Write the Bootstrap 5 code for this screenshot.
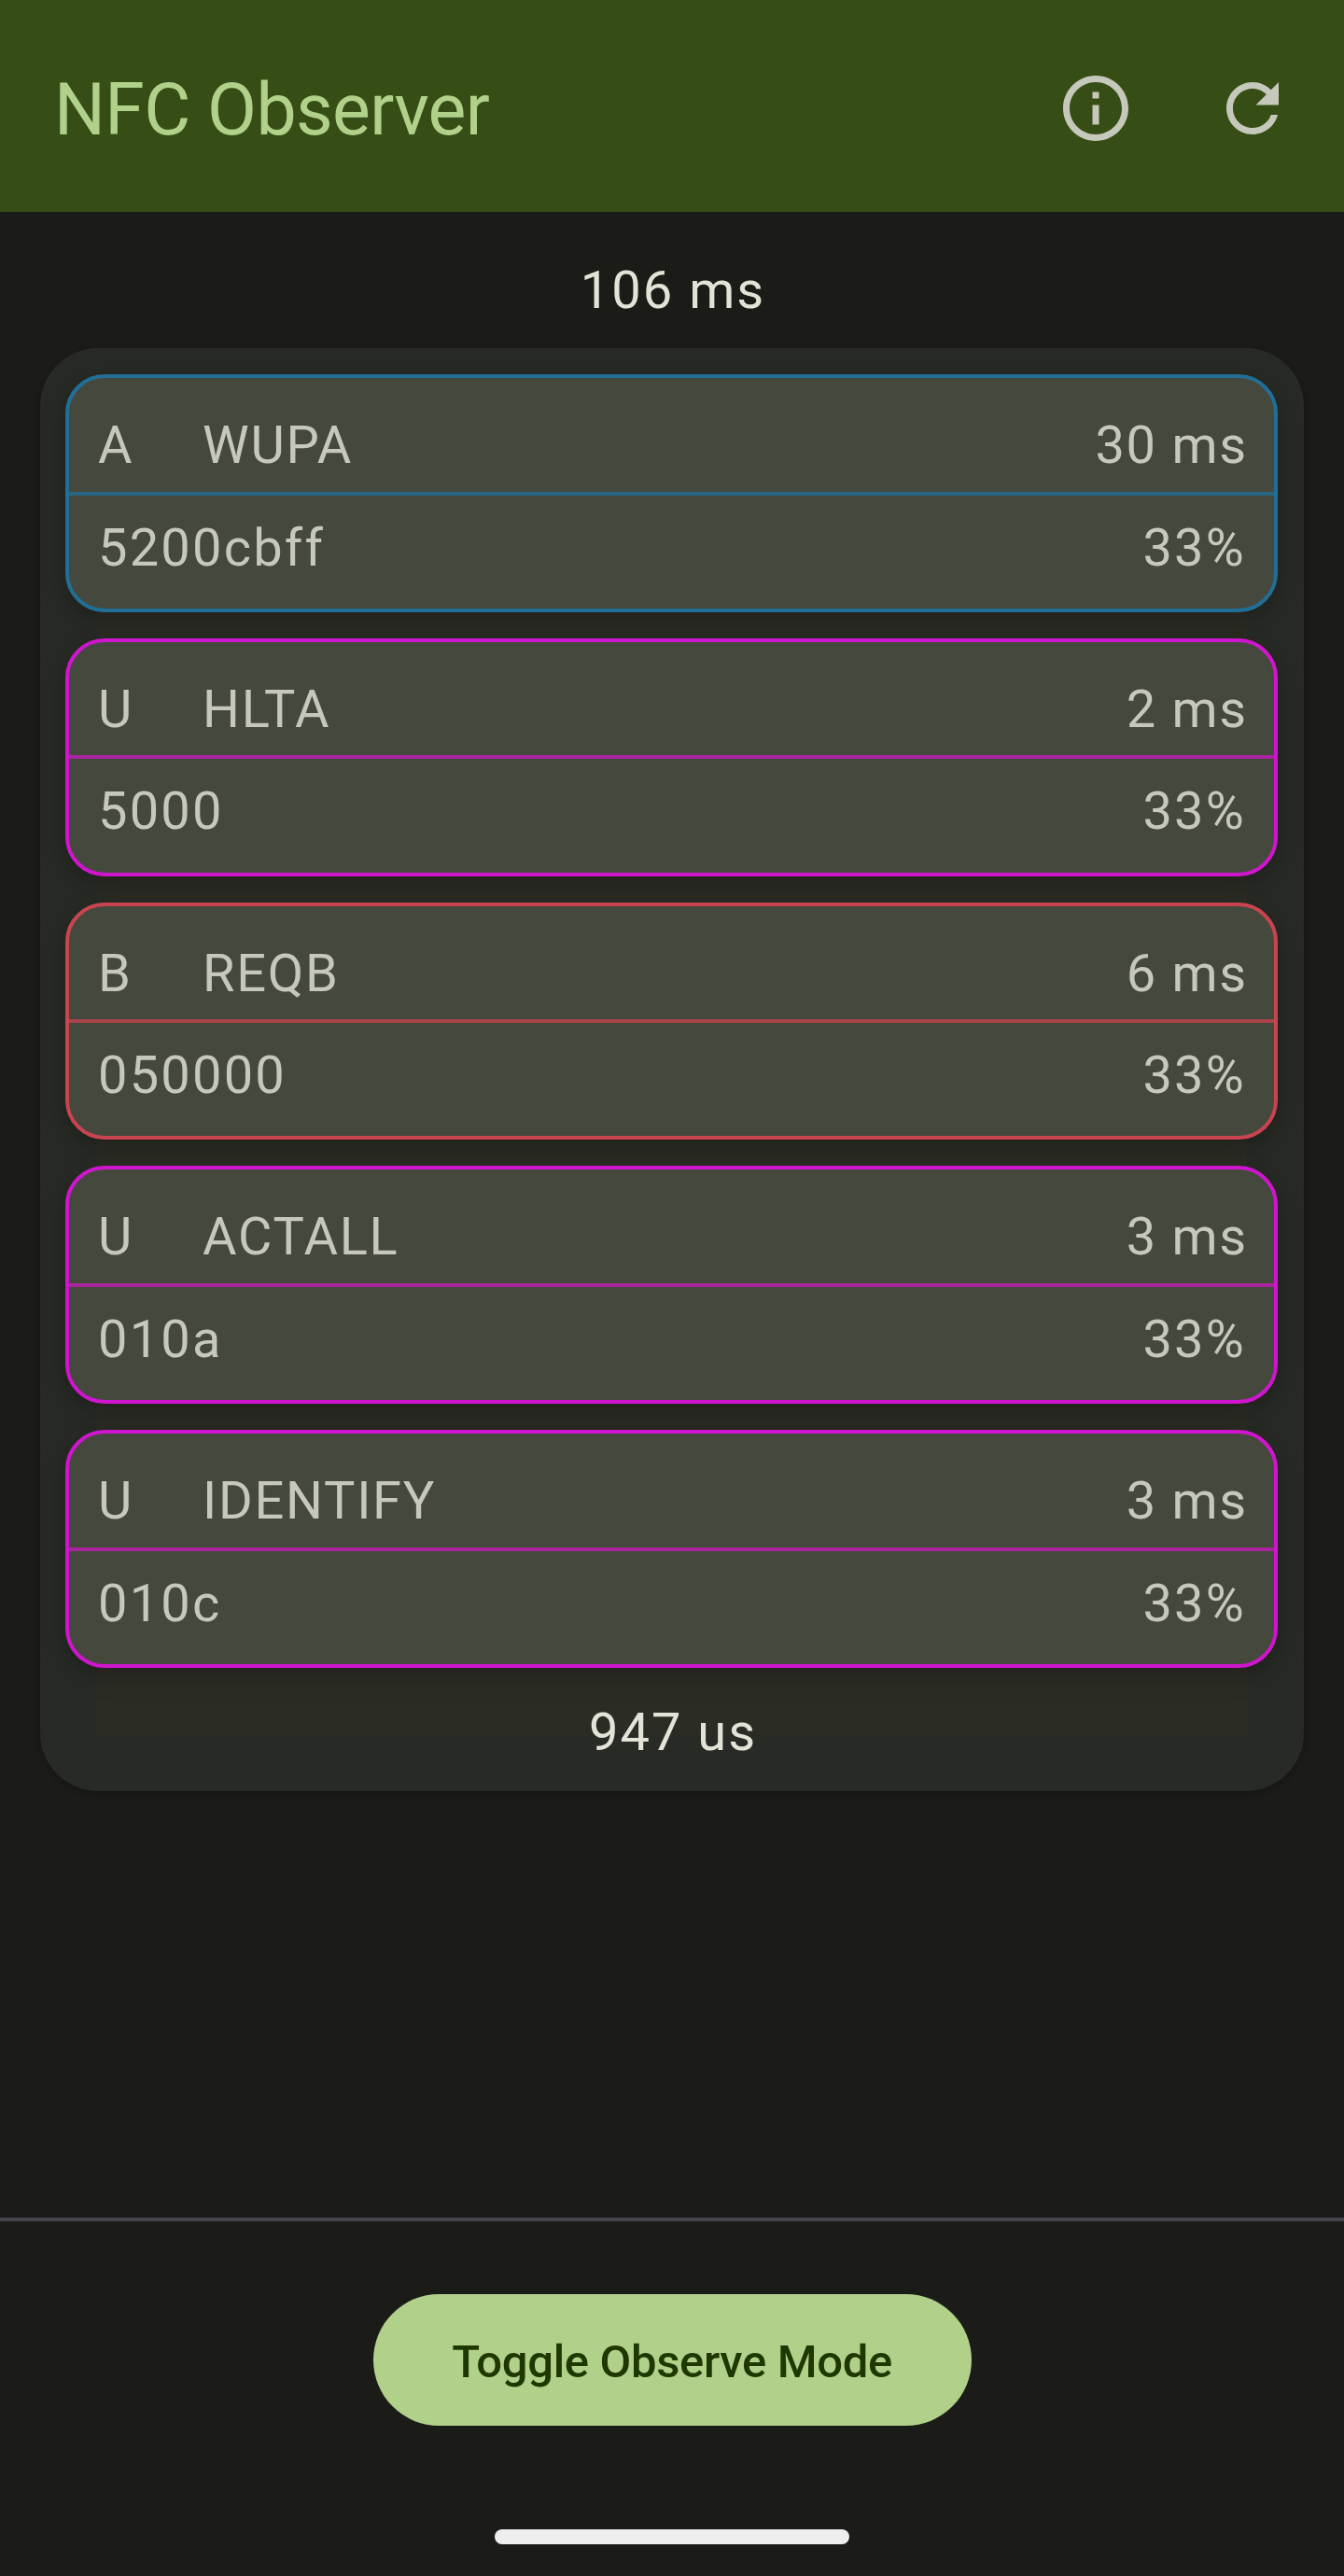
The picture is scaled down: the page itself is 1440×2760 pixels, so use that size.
<!DOCTYPE html>
<html lang="en" data-bs-theme="dark">
<head>
<meta charset="utf-8">
<meta name="viewport" content="width=device-width, initial-scale=1">
<title>NFC Observer</title>
<link href="https://cdn.jsdelivr.net/npm/bootstrap@5.3.0/dist/css/bootstrap.min.css" rel="stylesheet">
<style>
body{background:#1b1c17;font-family:Roboto,sans-serif;font-size:56px;line-height:84px;letter-spacing:1.75px;color:#e3e3d8;height:2760px}
.topbar{background:#364e15;height:227px;padding:4px 56px 0 58px}
.topbar .app-title{font-size:77px;letter-spacing:-.65px;line-height:98px;color:#b1d18a;font-weight:400;padding-top:4px}
.icon-btn{color:#c5c8ba;width:84px;height:84px;line-height:0}
.icon-btn svg{width:84px;height:84px;fill:currentColor}
.icon-set{gap:84px}
.elapsed{height:146px;padding:42px 0 0 2px;letter-spacing:2px}
.loop-group{margin:0 43px;height:1546px;padding:28px 28px 0 27px;border-radius:62px;background:#282b25;box-shadow:0 3px 6px rgba(0,0,0,.22);isolation:isolate}
.loop-group::before{content:"";position:absolute;z-index:-1;left:61px;right:61px;top:60px;bottom:60px;background:#2b2d25}
.frames{gap:28px}
.frame{--tone:#216f96;--rule:#276784;height:254.75px;border:4px solid var(--tone);border-radius:42px;background:#44483d;color:#c5c8ba;box-shadow:0 8px 26px rgba(0,0,0,.28)}
.frame-u{--tone:#d015ce;--rule:#a9249f}
.frame-b{--tone:#c8444e;--rule:#a8444a}
.frame-line{padding:0 30px 0 31px}
.frame-head{height:125.5px;padding-top:30px;border-bottom:4px solid var(--rule)}
.frame-head .delta{margin-right:-2px}
.frame-data{padding-top:14px;letter-spacing:2.2px}
.kind{width:112px}
.loop-total{padding:27px 0 0 3px;letter-spacing:2px}
.bottombar{height:384px;border-top:4px solid #45454f;padding-top:78px}
.btn-observe{width:641px;height:141px;border-radius:71px;background:#b1d18a;color:#1f3701;font-size:49px;font-weight:500;letter-spacing:-.35px;padding:4px 0 0;border:0}
.gesture-pill{width:380px;height:16px;border-radius:8px;background:#eee;margin-top:111px}
</style>
</head>
<body class="d-flex flex-column overflow-hidden m-0">
<header class="topbar d-flex align-items-center justify-content-between flex-shrink-0">
  <h1 class="app-title m-0">NFC Observer</h1>
  <div class="icon-set d-flex">
    <button class="icon-btn btn p-0 border-0" type="button" aria-label="Info"><svg viewBox="0 0 24 24"><path d="M11 7h2v2h-2zm0 4h2v6h-2zm1-9C6.480 2 2 6.480 2 12s4.480 10 10 10 10-4.480 10-10S17.520 2 12 2zm0 18c-4.410 0-8-3.590-8-8s3.590-8 8-8 8 3.590 8 8-3.590 8-8 8z"/></svg></button>
    <button class="icon-btn btn p-0 border-0" type="button" aria-label="Refresh"><svg viewBox="0 0 24 24"><path d="M17.650 6.350C16.200 4.900 14.210 4 12 4c-4.420 0-7.990 3.580-7.990 8s3.570 8 7.990 8c3.730 0 6.840-2.550 7.730-6h-2.080c-.82 2.330-3.040 4-5.650 4-3.310 0-6-2.690-6-6s2.690-6 6-6c1.660 0 3.140.69 4.220 1.780L13 11h7V4l-2.350 2.350z"/></svg></button>
  </div>
</header>
<main class="flex-grow-1">
  <div class="elapsed text-center">106 ms</div>
  <section class="loop-group position-relative">
    <div class="frames d-flex flex-column">
      <article class="frame">
        <div class="frame-line frame-head d-flex"><span class="kind">A</span><span>WUPA</span><span class="delta ms-auto">30 ms</span></div>
        <div class="frame-line frame-data d-flex justify-content-between"><span>5200cbff</span><span>33%</span></div>
      </article>
      <article class="frame frame-u">
        <div class="frame-line frame-head d-flex"><span class="kind">U</span><span>HLTA</span><span class="delta ms-auto">2 ms</span></div>
        <div class="frame-line frame-data d-flex justify-content-between"><span>5000</span><span>33%</span></div>
      </article>
      <article class="frame frame-b">
        <div class="frame-line frame-head d-flex"><span class="kind">B</span><span>REQB</span><span class="delta ms-auto">6 ms</span></div>
        <div class="frame-line frame-data d-flex justify-content-between"><span>050000</span><span>33%</span></div>
      </article>
      <article class="frame frame-u">
        <div class="frame-line frame-head d-flex"><span class="kind">U</span><span>ACTALL</span><span class="delta ms-auto">3 ms</span></div>
        <div class="frame-line frame-data d-flex justify-content-between"><span>010a</span><span>33%</span></div>
      </article>
      <article class="frame frame-u">
        <div class="frame-line frame-head d-flex"><span class="kind">U</span><span>IDENTIFY</span><span class="delta ms-auto">3 ms</span></div>
        <div class="frame-line frame-data d-flex justify-content-between"><span>010c</span><span>33%</span></div>
      </article>
    </div>
    <div class="loop-total text-center">947 us</div>
  </section>
</main>
<footer class="bottombar d-flex flex-column align-items-center flex-shrink-0">
  <button class="btn-observe btn" type="button">Toggle Observe Mode</button>
  <div class="gesture-pill"></div>
</footer>
<script src="https://cdn.jsdelivr.net/npm/bootstrap@5.3.0/dist/js/bootstrap.bundle.min.js"></script>
</body>
</html>
